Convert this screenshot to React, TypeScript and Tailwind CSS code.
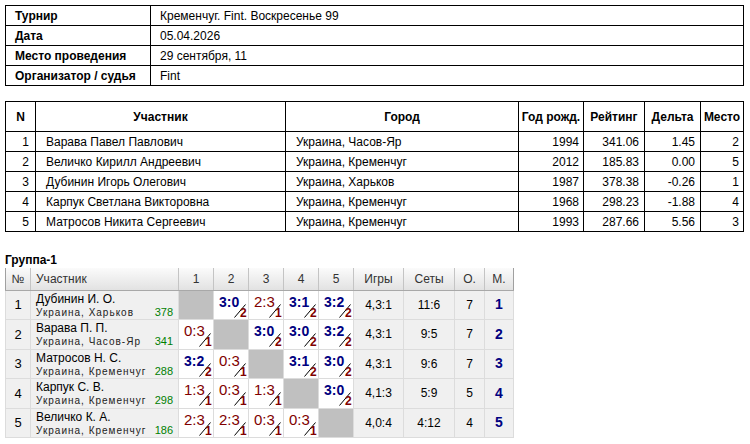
import React from 'react'

const info = [
  ['Турнир', 'Кременчуг. Fint. Воскресенье 99'],
  ['Дата', '05.04.2026'],
  ['Место проведения', '29 сентября, 11'],
  ['Организатор / судья', 'Fint'],
]

const players = [
  { n: 1, name: 'Варава Павел Павлович', city: 'Украина, Часов-Яр', year: 1994, rating: '341.06', delta: '1.45', place: 2 },
  { n: 2, name: 'Величко Кирилл Андреевич', city: 'Украина, Кременчуг', year: 2012, rating: '185.83', delta: '0.00', place: 5 },
  { n: 3, name: 'Дубинин Игорь Олегович', city: 'Украина, Харьков', year: 1987, rating: '378.38', delta: '-0.26', place: 1 },
  { n: 4, name: 'Карпук Светлана Викторовна', city: 'Украина, Кременчуг', year: 1968, rating: '298.23', delta: '-1.88', place: 4 },
  { n: 5, name: 'Матросов Никита Сергеевич', city: 'Украина, Кременчуг', year: 1993, rating: '287.66', delta: '5.56', place: 3 },
]

// score strings: "3:0/2" -> score + points, null = diagonal
const group = [
  { name: 'Дубинин И. О.', city: 'Украина, Харьков', r: 378, res: [null, '3:0/2', '2:3/1', '3:1/2', '3:2/2'], games: '4,3:1', sets: '11:6', o: 7, m: 1 },
  { name: 'Варава П. П.', city: 'Украина, Часов-Яр', r: 341, res: ['0:3/1', null, '3:0/2', '3:0/2', '3:2/2'], games: '4,3:1', sets: '9:5', o: 7, m: 2 },
  { name: 'Матросов Н. С.', city: 'Украина, Кременчуг', r: 288, res: ['3:2/2', '0:3/1', null, '3:1/2', '3:0/2'], games: '4,3:1', sets: '9:6', o: 7, m: 3 },
  { name: 'Карпук С. В.', city: 'Украина, Кременчуг', r: 298, res: ['1:3/1', '0:3/1', '1:3/1', null, '3:0/2'], games: '4,1:3', sets: '5:9', o: 5, m: 4 },
  { name: 'Величко К. А.', city: 'Украина, Кременчуг', r: 186, res: ['2:3/1', '2:3/1', '0:3/1', '0:3/1', null], games: '4,0:4', sets: '4:12', o: 4, m: 5 },
]

function ScoreCell({ value }: { value: string | null }) {
  if (!value) {
    return <td className="border border-[#dcdcdc] bg-[#c0c0c0] p-0" />
  }
  const [score, pts] = value.split('/')
  const win = pts === '2'
  return (
    <td className="relative border border-[#dcdcdc] bg-white p-0">
      <span
        className={
          win
            ? 'absolute left-[5px] top-[3px] text-[14px] leading-[16px] font-bold text-[#000080]'
            : 'absolute left-[5px] top-[2px] text-[15px] leading-[17px] text-[#800000]'
        }
      >
        {score}
      </span>
      <svg className="absolute left-[20px] top-[13px]" width="12" height="14" viewBox="0 0 12 14">
        <line x1="0.5" y1="13.5" x2="11.5" y2="0.5" stroke="#000" strokeWidth="1" />
      </svg>
      <span className="absolute left-[26px] top-[16px] text-[12px] leading-[12px] font-bold text-[#800000]">
        {pts}
      </span>
    </td>
  )
}

export default function App() {
  return (
    <div className="bg-white w-[750px] h-[444px] overflow-hidden font-['Liberation_Sans',Arial,sans-serif] text-black">
      {/* tournament info */}
      <table className="ml-[5px] mt-[5px] w-[739px] table-fixed border-collapse border border-black text-[12px]">
        <colgroup>
          <col className="w-[145px]" />
          <col />
        </colgroup>
        <tbody>
          {info.map(([k, v]) => (
            <tr key={k} className="h-[20px]">
              <td className="border border-black pl-[9px] py-0 font-bold">{k}</td>
              <td className="border border-black pl-[9px] py-0">{v}</td>
            </tr>
          ))}
        </tbody>
      </table>

      {/* participants */}
      <table className="ml-[5px] mt-[15px] w-[738px] table-fixed border-collapse border border-black text-[12px]">
        <colgroup>
          <col className="w-[30px]" />
          <col className="w-[250px]" />
          <col className="w-[233px]" />
          <col className="w-[65px]" />
          <col className="w-[61px]" />
          <col className="w-[56px]" />
          <col className="w-[43px]" />
        </colgroup>
        <thead>
          <tr className="h-[30px] font-bold">
            <th className="border border-black p-0">N</th>
            <th className="border border-black p-0">Участник</th>
            <th className="border border-black p-0">Город</th>
            <th className="border border-black p-0">Год рожд.</th>
            <th className="border border-black p-0">Рейтинг</th>
            <th className="border border-black p-0">Дельта</th>
            <th className="border border-black p-0">Место</th>
          </tr>
        </thead>
        <tbody>
          {players.map((p) => (
            <tr key={p.n} className="h-[20px]">
              <td className="border border-black py-0 pr-[6px] text-right">{p.n}</td>
              <td className="border border-black py-0 pl-[10px]">{p.name}</td>
              <td className="border border-black py-0 pl-[10px]">{p.city}</td>
              <td className="border border-black py-0 pr-[4px] text-right">{p.year}</td>
              <td className="border border-black py-0 pr-[5px] text-right">{p.rating}</td>
              <td className="border border-black py-0 pr-[5px] text-right">{p.delta}</td>
              <td className="border border-black py-0 pr-[4px] text-right">{p.place}</td>
            </tr>
          ))}
        </tbody>
      </table>

      {/* group */}
      <div className="ml-[5px] mt-[20px] text-[12px] leading-[16px] font-bold">Группа-1</div>
      <table className="ml-[5px] w-[508px] table-fixed border-collapse border-x border-b border-[#a0a0a0] text-[12px]">
        <colgroup>
          <col className="w-[25px]" />
          <col className="w-[148px]" />
          <col className="w-[35px]" />
          <col className="w-[35px]" />
          <col className="w-[35px]" />
          <col className="w-[35px]" />
          <col className="w-[35px]" />
          <col className="w-[50px]" />
          <col className="w-[51px]" />
          <col className="w-[30px]" />
          <col className="w-[29px]" />
        </colgroup>
        <thead>
          <tr className="h-[22px] bg-gradient-to-b from-[#fbfbfb] to-[#e2e2e2] text-[#333]">
            <th className="border-r border-b border-[#c4c4c4] border-b-[#a8a8a8] p-0 font-normal">№</th>
            <th className="border-r border-b border-[#c4c4c4] border-b-[#a8a8a8] p-0 pl-[5px] text-left font-normal">Участник</th>
            {[1, 2, 3, 4, 5].map((i) => (
              <th key={i} className="border-r border-b border-[#c4c4c4] border-b-[#a8a8a8] p-0 font-normal">
                {i}
              </th>
            ))}
            <th className="border-r border-b border-[#c4c4c4] border-b-[#a8a8a8] p-0 font-normal">Игры</th>
            <th className="border-r border-b border-[#c4c4c4] border-b-[#a8a8a8] p-0 font-normal">Сеты</th>
            <th className="border-r border-b border-[#c4c4c4] border-b-[#a8a8a8] p-0 font-normal">О.</th>
            <th className="border-b border-[#a8a8a8] p-0 font-normal">М.</th>
          </tr>
        </thead>
        <tbody>
          {group.map((g, i) => (
            <tr key={g.name} className="h-[29.5px]">
              <td className="border border-[#dcdcdc] bg-[#f0f0f0] p-0 text-center text-[13px]">{i + 1}</td>
              <td className="border border-[#dcdcdc] bg-[#f0f0f0] px-[5px] py-0 align-top">
                <div className="pt-[1px] text-[12px] leading-[14px]">{g.name}</div>
                <div className="flex items-end justify-between leading-[13px]">
                  <span className="text-[10px] tracking-[1px] text-[#222]">{g.city}</span>
                  <span className="text-[11px] text-[#008000]">{g.r}</span>
                </div>
              </td>
              {g.res.map((r, j) => (
                <ScoreCell key={j} value={r} />
              ))}
              <td className="border border-[#dcdcdc] bg-[#f0f0f0] p-0 text-center">{g.games}</td>
              <td className="border border-[#dcdcdc] bg-[#f0f0f0] p-0 text-center">{g.sets}</td>
              <td className="border border-[#dcdcdc] bg-[#f0f0f0] p-0 text-center">{g.o}</td>
              <td className="border border-[#dcdcdc] bg-[#f0f0f0] p-0 text-center text-[14px] font-bold text-[#000080]">{g.m}</td>
            </tr>
          ))}
        </tbody>
      </table>
    </div>
  )
}
